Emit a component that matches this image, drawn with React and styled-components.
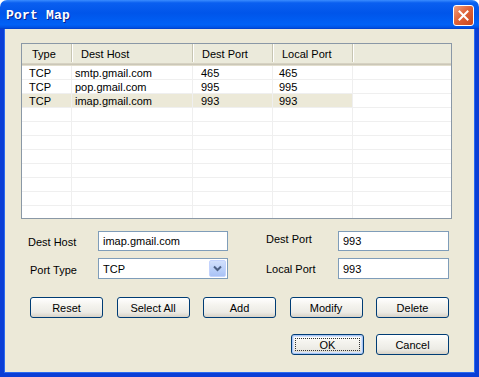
import React from 'react';
import styled, { createGlobalStyle } from 'styled-components';

const Global = createGlobalStyle`
  html, body { margin: 0; padding: 0; background: #fff; }
  body { font-family: "Liberation Sans", Arial, sans-serif; font-size: 11px; color: #000; }
  * { box-sizing: border-box; }
`

const Window = styled.div`
  width: 479px;
  height: 377px;
  display: flex;
  flex-direction: column;
`
const TitleBar = styled.div`
  height: 29px;
  flex: none;
  border-radius: 7px 7px 0 0;
  display: flex;
  align-items: center;
  justify-content: space-between;
  padding: 0 5px 0 6px;
  background: linear-gradient(180deg, #3a8cff 0%, #0a5ff0 10%, #0055ea 45%, #0061f6 85%, #0054e6 94%, #003dc8 100%);
`
const Title = styled.span`
  font-family: "Liberation Mono", "DejaVu Sans Mono", monospace;
  font-weight: bold;
  font-size: 13px;
  color: #fff;
  letter-spacing: 0.2px;
  text-shadow: 1px 1px 0 #0a1e8a;
  margin-top: 2px;
`
const CloseButton = styled.div`
  width: 21px;
  height: 21px;
  border: 1px solid #fff;
  border-radius: 3px;
  background: linear-gradient(135deg, #f0a07f 0%, #e0643a 45%, #c8461d 100%);
  display: flex;
  align-items: center;
  justify-content: center;
  margin-top: 1px;
`
const Body = styled.div`
  flex: 1;
  background: #ece9d8;
  border: 4px solid #0a3ed6;
  border-top: none;
  box-shadow: inset 1px 0 0 #2a6af0, inset -1px 0 0 #2a6af0, inset 0 -1px 0 #2a6af0;
  padding: 14px 0 0 17px;
  display: flex;
  flex-direction: column;
`
const List = styled.div`
  width: 431px;
  height: 176px;
  border: 1px solid #8a98a6;
  background: #fff;
  overflow: hidden;
  margin-bottom: 12px;
`
const Header = styled.div`
  display: flex;
  height: 22px;
  background: #ebeadb;
  border-bottom: 1px solid #e2decd;
  box-shadow: inset 0 -1px 0 #cbc7b8, inset 0 -2px 0 #d6d2c2;
`
const HeadCell = styled.div`
  width: ${p => p.w}px;
  flex: ${p => (p.fill ? 1 : 'none')};
  padding-left: ${p => p.pad}px;
  display: flex;
  align-items: center;
  padding-top: 1px;
  margin-bottom: 3px;
  border-right: ${p => (p.fill ? 'none' : '1px solid #c7c5b2')};
  box-shadow: ${p => (p.fill ? 'none' : '1px 0 0 #fff')};
  white-space: nowrap;
`
const Row = styled.div`
  display: flex;
  height: 14px;
  background: ${p => (p.selected ? '#ece9d8' : '#fff')};
`
const Cell = styled.div`
  width: ${p => p.w}px;
  flex: ${p => (p.fill ? 1 : 'none')};
  padding-left: ${p => p.pad || 0}px;
  border-right: ${p => (p.fill ? 'none' : '1px solid #efefef')};
  border-bottom: 1px solid #efefef;
  background: ${p => (p.fill ? '#fff' : 'transparent')};
  line-height: 14px;
  white-space: nowrap;
`
const Form = styled.div`
  display: grid;
  grid-template-columns: 70px 130px 38px 72px 111px;
  grid-template-rows: 20px 21px;
  row-gap: 7px;
  padding-left: 7px;
  align-items: center;
`
const Label = styled.div`
  padding-left: ${p => p.shift || 0}px;
  margin-top: ${p => p.dy || 0}px;
`
const TextBox = styled.div`
  height: ${p => p.h || 20}px;
  border: 1px solid #7f9db9;
  background: #fff;
  display: flex;
  align-items: center;
  padding-left: 4px;
`
const Select = styled(TextBox)`
  justify-content: space-between;
  padding: 1px;
  padding-left: 4px;
`
const DropButton = styled.div`
  width: 17px;
  height: 17px;
  border-radius: 2px;
  background: linear-gradient(180deg, #d2e0fc 0%, #b9cff9 60%, #a9c2f5 100%);
  border: 1px solid #c3d3fd;
  display: flex;
  align-items: center;
  justify-content: center;
`
const ButtonRow = styled.div`
  width: 419px;
  margin-left: 9px;
  margin-top: ${p => p.top}px;
  display: flex;
  justify-content: ${p => (p.end ? 'flex-end' : 'space-between')};
  gap: 12px;
`
const Button = styled.div`
  width: 73px;
  height: 21px;
  border: 1px solid #003c74;
  border-radius: 3px;
  background: linear-gradient(180deg, #ffffff 0%, #f5f4ef 35%, #ecebe5 75%, #d8d2c6 100%);
  display: flex;
  align-items: center;
  justify-content: center;
  position: relative;
  box-shadow: ${p => (p.primary ? 'inset 0 0 0 1px #a8c5f4, inset 0 0 0 2px #d3e2fb' : 'none')};
  &::after {
    content: '';
    display: ${p => (p.primary ? 'block' : 'none')};
    position: absolute;
    inset: 3px;
    border: 1px dotted #333;
  }
`

const cols = [
  { key: 'type', label: 'Type', w: 50, hp: 10, cp: 7 },
  { key: 'host', label: 'Dest Host', w: 121, hp: 9, cp: 3 },
  { key: 'dport', label: 'Dest Port', w: 80, hp: 9, cp: 8 },
  { key: 'lport', label: 'Local Port', w: 80, hp: 9, cp: 6 },
]

const rows = [
  { type: 'TCP', host: 'smtp.gmail.com', dport: '465', lport: '465' },
  { type: 'TCP', host: 'pop.gmail.com', dport: '995', lport: '995' },
  { type: 'TCP', host: 'imap.gmail.com', dport: '993', lport: '993', selected: true },
]

const emptyRows = 8

export default function App() {
  return (
    <Window>
      <Global />
      <TitleBar>
        <Title>Port Map</Title>
        <CloseButton>
          <svg width="11" height="11" viewBox="0 0 11 11">
            <path d="M1.5 1.5 L9.5 9.5 M9.5 1.5 L1.5 9.5" stroke="#fff" strokeWidth="2" strokeLinecap="square" />
          </svg>
        </CloseButton>
      </TitleBar>
      <Body>
        <List>
          <Header>
            {cols.map(c => (
              <HeadCell key={c.key} w={c.w} pad={c.hp}>{c.label}</HeadCell>
            ))}
            <HeadCell fill />
          </Header>
          {rows.map((r, i) => (
            <Row key={i} selected={r.selected}>
              {cols.map(c => (
                <Cell key={c.key} w={c.w} pad={c.cp}>{r[c.key]}</Cell>
              ))}
              <Cell fill />
            </Row>
          ))}
          {Array.from({ length: emptyRows }).map((_, i) => (
            <Row key={'e' + i}>
              {cols.map(c => <Cell key={c.key} w={c.w} />)}
              <Cell fill />
            </Row>
          ))}
        </List>

        <Form>
          <Label dy={2}>Dest Host</Label>
          <TextBox>imap.gmail.com</TextBox>
          <div />
          <Label dy={-4}>Dest Port</Label>
          <TextBox>993</TextBox>

          <Label shift={2} dy={3}>Port Type</Label>
          <Select h={21}>
            <span>TCP</span>
            <DropButton>
              <svg width="9" height="7" viewBox="0 0 9 7">
                <path d="M1 1.5 L4.5 5 L8 1.5" fill="none" stroke="#4d6185" strokeWidth="2" />
              </svg>
            </DropButton>
          </Select>
          <div />
          <Label>Local Port</Label>
          <TextBox h={21}>993</TextBox>
        </Form>

        <ButtonRow top={18}>
          <Button>Reset</Button>
          <Button>Select All</Button>
          <Button>Add</Button>
          <Button>Modify</Button>
          <Button>Delete</Button>
        </ButtonRow>
        <ButtonRow top={16} end>
          <Button primary>OK</Button>
          <Button>Cancel</Button>
        </ButtonRow>
      </Body>
    </Window>
  );
}
